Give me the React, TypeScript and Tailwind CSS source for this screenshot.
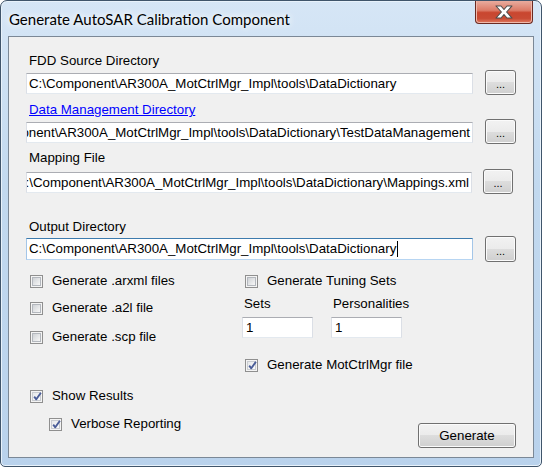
import React from "react";

const FONT = "font-['Liberation_Sans',Arial,sans-serif]";

function Check({ checked }: { checked?: boolean }) {
  return (
    <span className="w-[13px] h-[13px] shrink-0 border border-[#8f8f8f] bg-[#f4f4f4] flex items-center justify-center relative">
      <span
        className={
          checked
            ? "w-[9px] h-[9px] border border-[#c9ccd1] bg-[linear-gradient(135deg,#e6e8ea,#fbfbfb)]"
            : "w-[9px] h-[9px] border border-[#b3b7bd] bg-[linear-gradient(135deg,#cfd2d6,#f7f7f7)]"
        }
      />
      {checked && (
        <svg className="absolute left-[1px] top-[0px]" width="11" height="11" viewBox="0 0 11 11">
          <path d="M2.2 5.6 L4.3 8.3 L8.9 1.8" fill="none" stroke="#4a5d98" strokeWidth="1.9" strokeLinejoin="round" />
        </svg>
      )}
    </span>
  );
}

function CheckRow({ label, checked, className = "" }: { label: string; checked?: boolean; className?: string }) {
  return (
    <div className={`h-[20px] flex items-center gap-[9px] ${className}`}>
      <Check checked={checked} />
      <span className="leading-[16px] whitespace-nowrap">{label}</span>
    </div>
  );
}

function Dots({ className = "" }: { className?: string }) {
  return (
    <div
      className={`border border-[#707070] rounded-[3px] bg-[linear-gradient(#f2f2f2,#ebebeb_50%,#dddddd_50%,#cfcfcf)] shadow-[inset_0_0_0_1px_#fbfbfb] flex items-center justify-center text-[11px] leading-none pt-[4px] ${className}`}
    >
      ...
    </div>
  );
}

function Box({ children, className = "", right }: { children: React.ReactNode; className?: string; right?: boolean }) {
  return (
    <div
      className={`h-[21px] border border-[#abadb3] border-l-[#dbdfe6] border-r-[#dbdfe6] border-b-[#e3e9ef] bg-white flex items-center overflow-hidden whitespace-nowrap pl-[2px] pr-[2px] ${
        right ? "justify-end" : ""
      } ${className}`}
    >
      {children}
    </div>
  );
}

export default function App() {
  return (
    <div className={`w-[542px] h-[467px] bg-white overflow-hidden ${FONT} text-[13.3px] text-black`}>
      <div className="w-[542px] h-[467px] flex flex-col rounded-t-[7px] rounded-b-[5px] border border-[#40556b] bg-[linear-gradient(180deg,#d6e6f6_0%,#c2d9ef_40%,#b9d2ec_100%)] shadow-[inset_0_0_0_1px_#e8f2fb] overflow-hidden">
        {/* title bar */}
        <div className="h-[35px] flex items-start justify-between">
          <div className="ml-[8px] mt-[9px] text-[15px] leading-[18px] font-['Lato','Noto_Sans',sans-serif] text-black [text-shadow:0_0_6px_#ffffff,0_0_10px_#ffffff]">
            Generate AutoSAR Calibration Component
          </div>
          <div className="mr-[8px] -mt-[1px] w-[58px] h-[24px] rounded-b-[4px] border border-[#6b2a22] border-t-0 bg-[linear-gradient(180deg,#eab1a4_0%,#dc7b67_45%,#c9462f_55%,#c94b34_80%,#e07a60_100%)] shadow-[inset_0_0_0_1px_#f0b9ab] flex items-center justify-center">
            <svg width="22" height="14" viewBox="0 0 22 14">
              <path
                d="M3 1 H8 L11 4.5 L14 1 H19 L13.6 7 L19 13 H14 L11 9.5 L8 13 H3 L8.4 7 Z"
                fill="#ffffff"
                stroke="#4d4d4d"
                strokeWidth="1.1"
                strokeLinejoin="round"
              />
            </svg>
          </div>
        </div>

        {/* client area */}
        <div className="ml-[7px] w-[526px] h-[422px] border border-[#7b8896] bg-[#f0f0f0] flex flex-col">
          <div className="pl-[17px] flex flex-col">
            <div className="mt-[16px] h-[16px] leading-[16px] ml-[3px]">FDD Source Directory</div>
            <div className="mt-[1px] h-[25px] flex items-start">
              <Box className="mt-[3px] w-[447px]">C:\Component\AR300A_MotCtrlMgr_Impl\tools\DataDictionary</Box>
              <Dots className="ml-[12px] w-[31px] h-[25px]" />
            </div>

            <div className="mt-[7px] h-[16px] leading-[16px] ml-[3px] text-[#0000ff] underline">Data Management Directory</div>
            <div className="mt-[1px] h-[25px] flex items-start">
              <Box right className="mt-[3px] w-[447px]">
                C:\Component\AR300A_MotCtrlMgr_Impl\tools\DataDictionary\TestDataManagement
              </Box>
              <Dots className="ml-[12px] w-[31px] h-[25px]" />
            </div>

            <div className="mt-[6px] h-[16px] leading-[16px] ml-[3px]">Mapping File</div>
            <div className="mt-[3px] h-[25px] flex items-start">
              <Box right className="mt-[3px] w-[446px]">
                C:\Component\AR300A_MotCtrlMgr_Impl\tools\DataDictionary\Mappings.xml
              </Box>
              <Dots className="ml-[11px] w-[30px] h-[25px]" />
            </div>

            <div className="mt-[25px] h-[16px] leading-[16px] ml-[3px]">Output Directory</div>
            <div className="mt-[1px] h-[26px] flex items-start">
              <div className="mt-[2px] w-[447px] h-[22px] border border-[#3d7bad] border-l-[#a4c6e8] border-r-[#a4c6e8] border-b-[#b7d5f2] bg-white flex items-center overflow-hidden whitespace-nowrap pl-[2px]">
                C:\Component\AR300A_MotCtrlMgr_Impl\tools\DataDictionary
                <span className="inline-block w-[1px] h-[16px] bg-black ml-[1px]" />
              </div>
              <Dots className="ml-[12px] w-[31px] h-[26px]" />
            </div>
          </div>

          {/* options */}
          <div className="mt-[9px] flex">
            <div className="ml-[21px] w-[212px] flex flex-col">
              <CheckRow label="Generate .arxml files" />
              <CheckRow label="Generate .a2l file" className="mt-[7px]" />
              <CheckRow label="Generate .scp file" className="mt-[9px]" />
            </div>
            <div className="flex flex-col">
              <CheckRow label="Generate Tuning Sets" className="ml-[3px]" />
              <div className="mt-[5px] grid grid-cols-[71px_71px] gap-x-[18px]">
                <div className="h-[16px] leading-[16px] ml-[2px]">Sets</div>
                <div className="h-[16px] leading-[16px] ml-[2px]">Personalities</div>
                <Box className="mt-[5px] w-[71px] pl-[3px]">1</Box>
                <Box className="mt-[5px] w-[71px] pl-[3px]">1</Box>
              </div>
              <CheckRow label="Generate MotCtrlMgr file" checked className="ml-[3px] mt-[17px]" />
            </div>
          </div>

          <div className="mt-[11px] flex justify-between">
            <div className="ml-[21px] flex flex-col">
              <CheckRow label="Show Results" checked />
              <CheckRow label="Verbose Reporting" checked className="ml-[19px] mt-[8px]" />
            </div>
            <div className="mt-[37px] mr-[17px] w-[98px] h-[25px] border border-[#707070] rounded-[3px] bg-[linear-gradient(#f2f2f2,#ebebeb_50%,#dddddd_50%,#cfcfcf)] shadow-[inset_0_0_0_1px_#fbfbfb] flex items-center justify-center">
              Generate
            </div>
          </div>
        </div>
      </div>
    </div>
  );
}
